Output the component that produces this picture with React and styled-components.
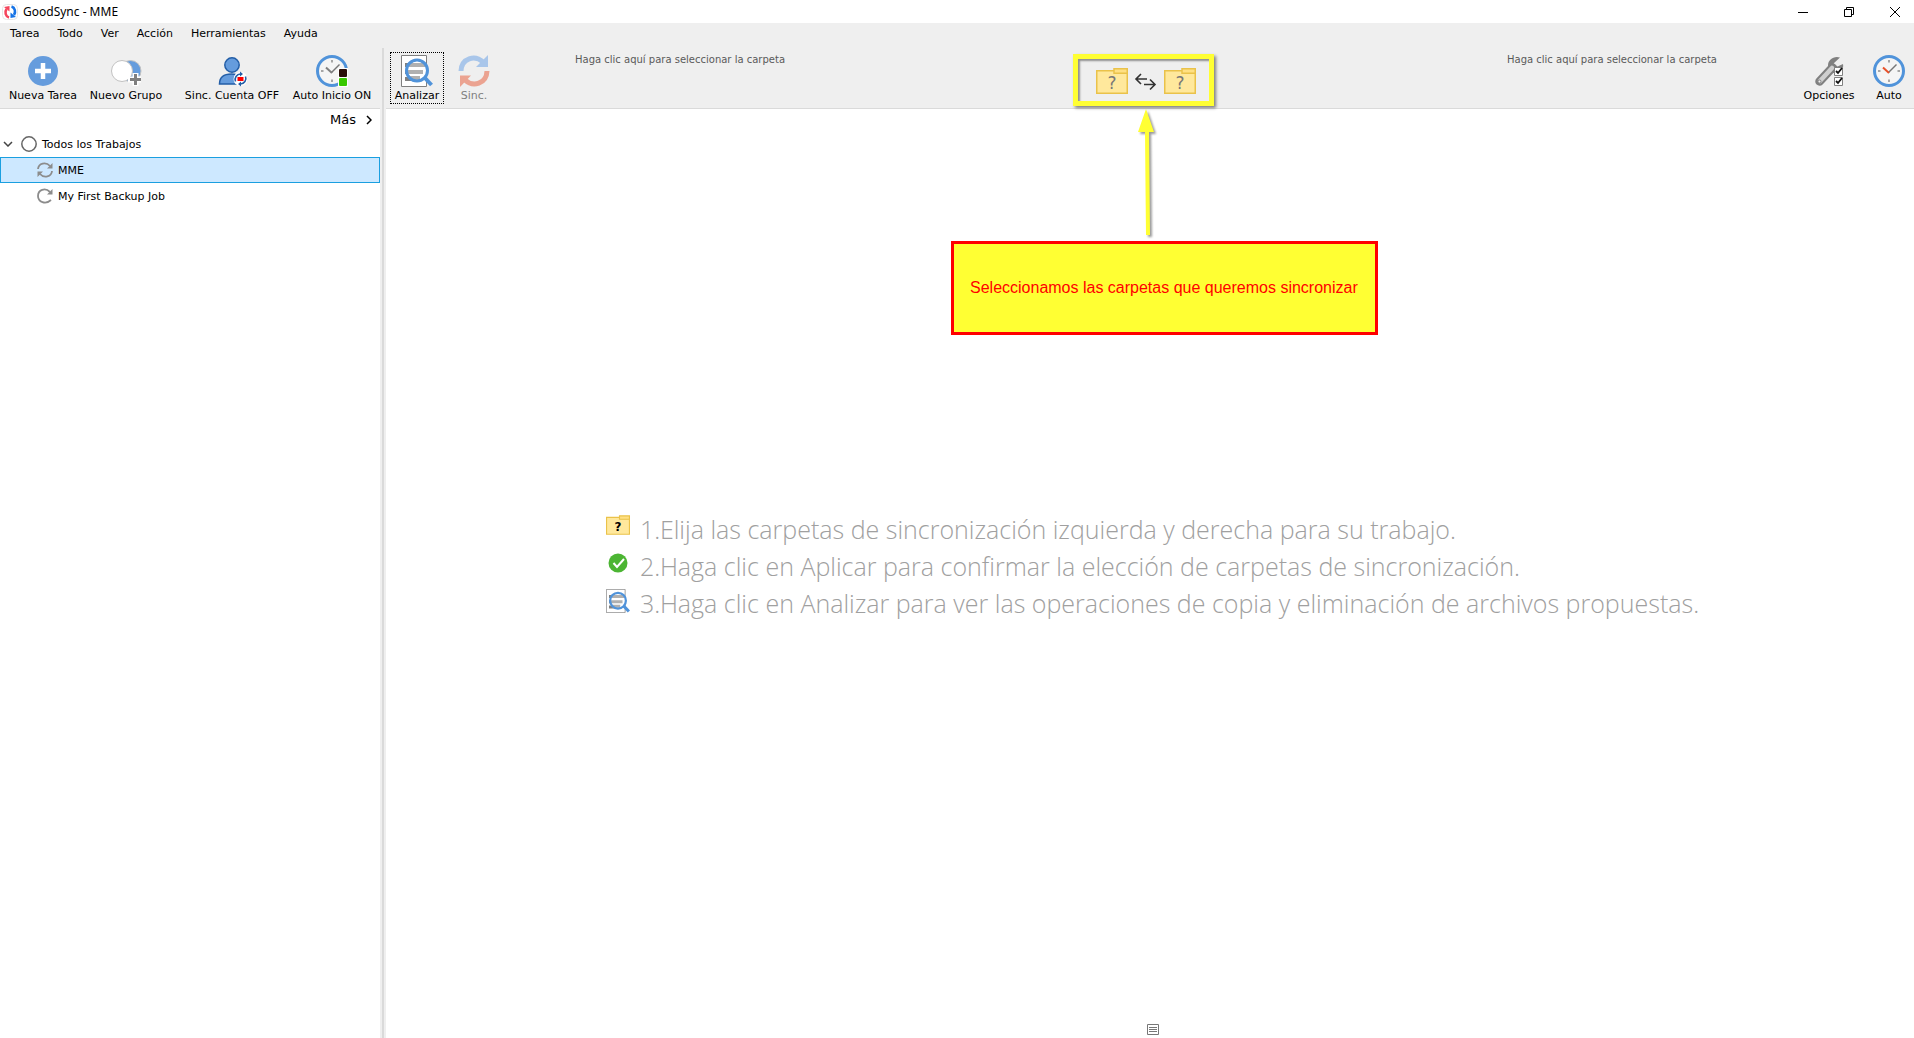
import React from 'react';
import styled, { createGlobalStyle } from 'styled-components';

const Global = createGlobalStyle`
  * { box-sizing: border-box; }
  body {
    margin: 0;
    background: #fff;
    color: #000;
    font: 11px/14px Verdana, "DejaVu Sans", sans-serif;
  }
  button { font: inherit; color: inherit; }
  svg { display: block; flex: none; }
`;

const Window = styled.div`
  display: flex;
  flex-direction: column;
  min-height: 100vh;
`;

const TitleBar = styled.header`
  display: flex;
  align-items: center;
  height: 23px;
  padding-left: 2px;
  background: #fff;
`;

const Title = styled.h1`
  margin: 0 auto 0 5px;
  font: 400 12px/16px "Segoe UI", "Noto Sans", sans-serif;
`;

const WindowButtons = styled.div`
  display: flex;
  gap: 8px;
`;

const WindowButton = styled.button`
  display: flex;
  align-items: center;
  justify-content: center;
  width: 38px;
  height: 20px;
  padding: 0;
  border: 0;
  background: transparent;
`;

const MenuBar = styled.nav`
  display: flex;
  gap: 18px;
  height: 25px;
  padding: 4px 10px;
  background: #efefef;
`;

const MenuItem = styled.button`
  height: 14px;
  padding: 0;
  border: 0;
  background: transparent;
`;

const Body = styled.div`
  display: flex;
  flex: 1;
`;

const Sidebar = styled.aside`
  width: 380px;
  flex: none;
`;

const Splitter = styled.div`
  flex: none;
  width: 6px;
  border: solid #efefef;
  border-width: 0 2px;
  background: #dadada;
`;

const Main = styled.main`
  display: flex;
  flex: 1;
  flex-direction: column;
  min-width: 0;
`;

const Toolbar = styled.div`
  display: flex;
  align-items: flex-start;
  height: 61px;
  padding: 4px ${(p) => p.$side}px;
  border-bottom: 1px solid #dadada;
  background: #efefef;
`;

const ToolButton = styled.button`
  display: flex;
  flex: none;
  flex-direction: column;
  align-items: center;
  gap: 2px;
  width: ${(p) => p.$width}px;
  height: 52px;
  padding: 2px 0;
  margin-left: ${(p) => p.$gap || 0}px;
  border: 1px ${(p) => (p.$focused ? 'dotted #000' : 'solid transparent')};
  background: transparent;
  white-space: nowrap;

  &:disabled { color: #808080; }
`;

const More = styled.button`
  display: flex;
  align-items: center;
  gap: 10px;
  height: 22px;
  margin-left: auto;
  padding: 0 8px;
  border: 0;
  background: transparent;
  font-size: 13px;
`;

const Tree = styled.ul`
  margin: 0;
  padding: 0;
  list-style: none;
`;

const TreeRow = styled.button`
  display: flex;
  align-items: center;
  gap: 5px;
  width: 100%;
  height: 26px;
  padding: 0 0 0 ${(p) => (p.$child ? 36 : 2)}px;
  border: 1px solid ${(p) => (p.$selected ? '#1a9fe0' : 'transparent')};
  background: ${(p) => (p.$selected ? '#cde8ff' : 'transparent')};
  text-align: left;
`;

const TreeLabel = styled.span`
  padding-top: 2px;
`;

const Chevron = styled.svg`
  margin-right: 3px;
`;

const FolderField = styled.button`
  flex: 1;
  height: 52px;
  padding: 0 82px 36px;
  border: 0;
  background: transparent;
  color: #5a5a5a;
  font-size: 10px;
  text-align: ${(p) => p.$align};
  white-space: nowrap;
`;

const Picker = styled.div`
  position: relative;
  display: flex;
  flex: none;
  align-items: center;
  gap: 6px;
  height: 57px;
`;

const IconButton = styled.button`
  padding: 0;
  border: 0;
  background: transparent;
`;

const Highlight = styled.div`
  position: absolute;
  top: 2px;
  left: -23px;
  width: 141px;
  height: 52px;
  border: 5px solid #ffff33;
  box-shadow: 2px 2px 3px #0007, inset 2px 2px 2px #0006;
  pointer-events: none;
`;

const Arrow = styled.svg`
  position: absolute;
  top: 57px;
  left: 37px;
  filter: drop-shadow(2px 2px 1px #0006);
`;

const Callout = styled.p`
  position: absolute;
  top: 189px;
  left: -145px;
  margin: 0;
  padding: 35px 17px 35px 16px;
  border: 3px solid #f00;
  background: #ffff33;
  color: #f00;
  font: 16px/18px Arial, "Liberation Sans", sans-serif;
  white-space: nowrap;
`;

const Content = styled.section`
  display: flex;
  flex: 1;
  flex-direction: column;
  align-items: center;
  padding: 0 0 2px 5px;
`;

const Steps = styled.ol`
  margin: auto 0;
  padding: 0;
  color: #a0a0a0;
  font: 300 25px/37px "Segoe UI Light", "Open Sans", sans-serif;
  list-style: none;
`;

const Step = styled.li`
  display: grid;
  grid-template-columns: 34px 20px auto;
  height: 37px;
  white-space: nowrap;
`;

const StepIcon = styled.span`
  padding-top: 4px;
`;

const Logo = () => (
  <svg width="16" height="16" viewBox="0 0 16 16" fill="none">
    <rect x=".5" y=".5" width="15" height="15" rx="4" fill="#fff" stroke="#e6e6e6" />
    <path d="M7 13.500C3.500 12.500 2.500 8 4.500 5" stroke="#f5455c" strokeWidth="2.600" />
    <path d="M2 3 7.500 2v5.500z" fill="#f5455c" />
    <path d="M9.500 2.500c3.500 1 4.500 5.500 2.500 8.500" stroke="#1573e6" strokeWidth="2.600" />
    <path d="M14 13 8.500 14V8.500z" fill="#1573e6" />
  </svg>
);

const AddIcon = () => (
  <svg width="32" height="32" viewBox="0 0 32 32">
    <circle cx="16" cy="16" r="15" fill="#659cdd" />
    <path d="M8 16h16M16 8v16" stroke="#fff" strokeWidth="4.500" />
  </svg>
);

const GroupIcon = () => (
  <svg width="32" height="32" viewBox="0 0 32 32">
    <circle cx="20.500" cy="16" r="10.500" fill="#659cdd" stroke="#c2c2c2" />
    <circle cx="12" cy="16" r="10.500" fill="#fff" stroke="#c2c2c2" />
    <path d="M18 24.500h13M25.500 18v13" stroke="#fff" strokeWidth="6" />
    <path d="M20 24.500h11M25.500 19v11" stroke="#808080" strokeWidth="3" />
  </svg>
);

const AccountIcon = () => (
  <svg width="32" height="32" viewBox="0 0 32 32">
    <path d="M3.500 29c0-6 4-10 12-10s11 4 11 10z" fill="#659cdd" stroke="#235ea7" strokeWidth="1.500" />
    <circle cx="16" cy="10" r="7.200" fill="#659cdd" stroke="#235ea7" strokeWidth="1.500" />
    <circle cx="24.500" cy="24" r="7" fill="#fff" />
    <path d="M19.500 26.500a5.500 5.500 0 0 1 5-7.500M29.500 21.500a5.500 5.500 0 0 1-5 7.500" fill="none" stroke="#235ea7" strokeWidth="1.600" />
    <path d="M24 16.500v5l3-2.500zM25 26.500v5l-3-2.500z" fill="#235ea7" />
    <path d="M21.500 22h6v4h-6z" fill="#f00" />
  </svg>
);

const ClockIcon = ({ running }) => (
  <svg width="32" height="32" viewBox="0 0 32 32" fill="none">
    <circle cx="16" cy="16" r="14.500" fill="#f5f5f5" stroke="#5093da" strokeWidth="3" />
    <path d="M16 5v2.500M16 24.500V27M5 16h2.500M24.500 16H27" stroke="#a6a6a6" strokeWidth="2" />
    <path d="m15.500 17.500 8-8" stroke="#777" strokeWidth="1.500" />
    <path d="m10 12.500 6 5.500" stroke={running ? '#808080' : '#e8512a'} strokeWidth="2" />
    {running && (
      <g>
        <path d="M22 13h10v19H22z" fill="#fff" />
        <rect x="23" y="14" width="8" height="8" rx="1" fill="#2b0f0a" />
        <rect x="23" y="23" width="8" height="8" rx="1" fill="#38c800" />
      </g>
    )}
  </svg>
);

const AnalyzeIcon = ({ size }) => (
  <svg width={size} height={size} viewBox="0 0 32 32" fill="none">
    <path d="M.5.5h25v31H.500z" fill="#fff" stroke="#808080" />
    <path d="M4 10h8M4 17h8M4 24h14" stroke="#808080" strokeWidth="4" />
    <circle cx="16" cy="15.500" r="10" fill="#fff" />
    <path d="M8 10h16M6 17h16M9 23h10" stroke="#b0b0b0" strokeWidth="4" />
    <circle cx="16" cy="15.500" r="10.500" stroke="#5093da" strokeWidth="3" />
    <path d="m23.500 22.500 7 7.500" stroke="#5093da" strokeWidth="4" />
  </svg>
);

const SyncIcon = () => (
  <svg width="32" height="32" viewBox="0 0 32 32" fill="none">
    <path d="M3 16C3.500 3 17-.500 25 7" stroke="#a9c6ea" strokeWidth="5" />
    <path d="M30 0v12H18z" fill="#a9c6ea" />
    <path d="M29 16C28.500 29 15 32.500 7 25" stroke="#eba391" strokeWidth="5" />
    <path d="M2 32V20.500h11z" fill="#eba391" />
  </svg>
);

const SettingsIcon = () => (
  <svg width="32" height="32" viewBox="0 0 32 32" fill="none">
    <path d="m6.500 26.500 13-14" stroke="#808080" strokeWidth="8.500" strokeLinecap="round" />
    <path d="M27 2.500c-6-2-12 2-12 8 0 5 4 8 8 7.500 5-.500 8-4 7-9l-5.500 2.500-4-3z" fill="#808080" />
    <path d="m7 26 12-13" stroke="#cfcfcf" strokeWidth="4.500" strokeLinecap="round" />
    <circle cx="6.500" cy="26.500" r="1.500" fill="#efefef" stroke="#808080" />
    <path d="M21.500 12.500h8v8h-8zM21.500 22.500h8v8h-8z" fill="#fff" stroke="#808080" />
    <path d="m23 16 2 2 4-5M23 26l2 2 4-5" stroke="#111" strokeWidth="1.800" />
  </svg>
);

const FolderIcon = ({ small }) => (
  <svg width={small ? 24 : 32} height={small ? 20 : 26} viewBox="0 0 32 26">
    <path d="M.75 2.750h30.500v22.500H.750z" fill="#ffe89c" stroke="#eac24a" strokeWidth="1.500" />
    <path d="M18 .75h13.250v4.500H18z" fill="#ffe083" stroke="#eac24a" strokeWidth="1.500" />
    <text x="16" y="21" textAnchor="middle" fontFamily="DejaVu Sans, sans-serif" fontSize={small ? 16 : 17} fontWeight={small ? 700 : 400} fill={small ? '#000' : '#777'}>?</text>
  </svg>
);

const SwapIcon = () => (
  <svg width="24" height="26" viewBox="0 0 24 26" fill="none" stroke="#333" strokeWidth="1.600">
    <path d="M13 11H2m5-5-5 5 5 5M10 16.500h11m-5-5 5 5-5 5" />
  </svg>
);

const JobIcon = ({ twoWay }) => (
  <svg width="16" height="16" viewBox="0 0 16 16" fill="none" stroke="#8c8c8c" strokeWidth="1.800">
    {twoWay ? (
      <g>
        <path d="M1 7C1.500 1 9-.500 13 4M15 9c-.500 6-8 7.500-12 3" />
        <path d="M15.500 1v5.500H10zM.5 15V9.500H6z" fill="#8c8c8c" stroke="none" />
      </g>
    ) : (
      <g>
        <path d="M13 4C8-1 1 2 1 8c0 6 7.500 9 13 4" />
        <path d="M15.500 1v5.500H10z" fill="#8c8c8c" stroke="none" />
      </g>
    )}
  </svg>
);

const CheckIcon = () => (
  <svg width="24" height="22" viewBox="0 0 24 22" fill="none">
    <circle cx="12" cy="11" r="9.500" fill="#4cb533" />
    <path d="m7.500 11 3.500 4 7-8" stroke="#fff" strokeWidth="2" />
  </svg>
);

const MENUS = ['Tarea', 'Todo', 'Ver', 'Acción', 'Herramientas', 'Ayuda'];

const STEPS = [
  { icon: <FolderIcon small />, text: 'Elija las carpetas de sincronización izquierda y derecha para su trabajo.' },
  { icon: <CheckIcon />, text: 'Haga clic en Aplicar para confirmar la elección de carpetas de sincronización.' },
  { icon: <AnalyzeIcon size={24} />, text: 'Haga clic en Analizar para ver las operaciones de copia y eliminación de archivos propuestas.' },
];

export default function App() {
  return (
    <Window>
      <Global />
      <TitleBar>
        <Logo />
        <Title>GoodSync - MME</Title>
        <WindowButtons>
          <WindowButton aria-label="Minimizar">
            <svg width="10" height="10" stroke="#000"><path d="M0 5.500h10" /></svg>
          </WindowButton>
          <WindowButton aria-label="Restaurar">
            <svg width="10" height="10" fill="none" stroke="#000"><path d="M.5 2.500h7v7h-7zM2.500 2.500v-2h7v7h-2" /></svg>
          </WindowButton>
          <WindowButton aria-label="Cerrar">
            <svg width="10" height="10" stroke="#000"><path d="m0 0 10 10M10 0 0 10" /></svg>
          </WindowButton>
        </WindowButtons>
      </TitleBar>
      <MenuBar>
        {MENUS.map((name) => <MenuItem key={name}>{name}</MenuItem>)}
      </MenuBar>
      <Body>
        <Sidebar>
          <Toolbar $side={2}>
            <ToolButton $width={82}><AddIcon />Nueva Tarea</ToolButton>
            <ToolButton $width={84}><GroupIcon />Nuevo Grupo</ToolButton>
            <ToolButton $width={108} $gap={10}><AccountIcon />Sinc. Cuenta OFF</ToolButton>
            <ToolButton $width={92}><ClockIcon running />Auto Inicio ON</ToolButton>
          </Toolbar>
          <More>
            Más
            <svg width="6" height="10" fill="none" stroke="#000" strokeWidth="1.500"><path d="m1 1 4 4-4 4" /></svg>
          </More>
          <Tree>
            <li>
              <TreeRow>
                <Chevron width="10" height="6" fill="none" stroke="#444" strokeWidth="1.500"><path d="m1 1 4 4 4-4" /></Chevron>
                <svg width="16" height="16" fill="none" stroke="#666" strokeWidth="1.500"><circle cx="8" cy="8" r="7.200" /></svg>
                <TreeLabel>Todos los Trabajos</TreeLabel>
              </TreeRow>
              <Tree>
                <li><TreeRow $child $selected><JobIcon twoWay /><TreeLabel>MME</TreeLabel></TreeRow></li>
                <li><TreeRow $child><JobIcon /><TreeLabel>My First Backup Job</TreeLabel></TreeRow></li>
              </Tree>
            </li>
          </Tree>
        </Sidebar>
        <Splitter />
        <Main>
          <Toolbar $side={4}>
            <ToolButton $width={54} $focused><AnalyzeIcon size={32} />Analizar</ToolButton>
            <ToolButton $width={38} $gap={11} disabled><SyncIcon />Sinc.</ToolButton>
            <FolderField $align="left">Haga clic aquí para seleccionar la carpeta</FolderField>
            <Picker>
              <IconButton aria-label="Carpeta izquierda"><FolderIcon /></IconButton>
              <IconButton aria-label="Dirección"><SwapIcon /></IconButton>
              <IconButton aria-label="Carpeta derecha"><FolderIcon /></IconButton>
              <Highlight />
              <Arrow width="24" height="130" viewBox="0 0 24 130" fill="#ffff33">
                <path d="m13 0 8 23h-5l1 103h-4l-1-103H5z" />
              </Arrow>
              <Callout>Seleccionamos las carpetas que queremos sincronizar</Callout>
            </Picker>
            <FolderField $align="right">Haga clic aquí para seleccionar la carpeta</FolderField>
            <ToolButton $width={60}><SettingsIcon />Opciones</ToolButton>
            <ToolButton $width={42} $gap={9}><ClockIcon />Auto</ToolButton>
          </Toolbar>
          <Content>
            <Steps>
              {STEPS.map((step, i) => (
                <Step key={step.text}>
                  <StepIcon>{step.icon}</StepIcon>
                  <span>{i + 1}.</span>
                  <span>{step.text}</span>
                </Step>
              ))}
            </Steps>
            <IconButton aria-label="Registro">
              <svg width="12" height="12" fill="none" stroke="#777"><path d="M.5.5h11v10H.500zM2 3.500h8M2 5.500h8M2 7.500h8" /></svg>
            </IconButton>
          </Content>
        </Main>
      </Body>
    </Window>
  );
}
